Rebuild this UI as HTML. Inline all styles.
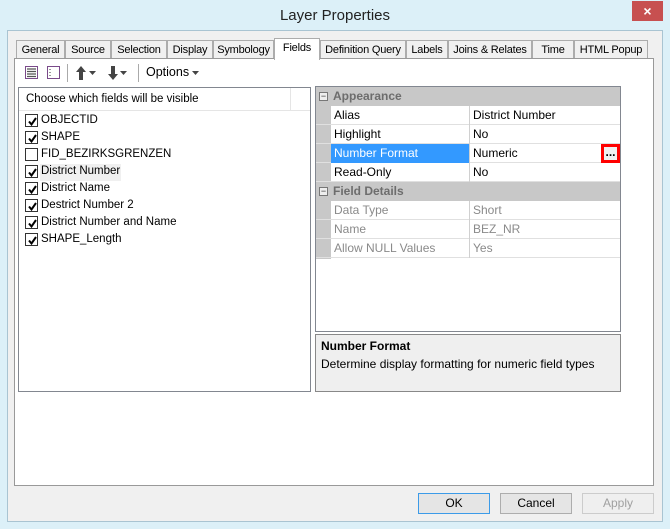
<!DOCTYPE html><html><head><style>
*{margin:0;padding:0;box-sizing:border-box}
body{width:670px;height:529px;background:#dcf0f8;font-family:"Liberation Sans",sans-serif;font-size:12px;color:#000;position:relative;overflow:hidden}
.a{position:absolute}
.tab{position:absolute;top:40px;height:19px;background:#f0f0f0;border:1px solid #acacac;border-bottom:none;text-align:center;line-height:18px;font-size:11px;white-space:nowrap;letter-spacing:-0.2px}
.cb{position:absolute;left:6px;width:13px;height:13px;border:1px solid #333;background:#fff}
.cb svg{position:absolute;left:1px;top:1px}
.it{position:absolute;left:22px;font-size:11.5px;height:17px;line-height:17px}
.row{position:absolute;left:0;width:304px;height:19px;border-bottom:1px solid #e0e0e0}
.n{position:absolute;left:15px;width:139px;height:19px;line-height:18px;padding-left:3px;border-right:1px solid #d0d0d0;font-size:12px}
.v{position:absolute;left:154px;height:19px;line-height:18px;padding-left:3px;font-size:12px}
.cat{position:absolute;left:0;width:304px;height:19px;background:#c8c8c8;font-weight:bold;color:#6d6d6d;line-height:18px;padding-left:17px;font-size:12px}
.mn{position:absolute;left:3px;top:5px;width:9px;height:9px;border:1px solid #777;background:#eee;font-size:9px;line-height:6px;text-align:center;color:#333;font-weight:normal}
.btn{position:absolute;top:493px;width:72px;height:21px;border:1px solid #adadad;background:#e5e5e5;text-align:center;line-height:19px;font-size:12px}
</style></head><body>
<div class="a" style="left:0;top:0;width:670px;height:30px;text-align:center;line-height:32px;font-size:15px;color:#222">Layer Properties</div>
<div class="a" style="left:632px;top:1px;width:31px;height:20px;background:#c75050;color:#fff;text-align:center;line-height:20px;font-size:14px;font-weight:bold">×</div>
<div class="a" style="left:7px;top:30px;width:656px;height:492px;background:#f0f0f0;border:1px solid #a9c4d2"></div>
<div class="tab" style="left:16px;width:49px">General</div>
<div class="tab" style="left:65px;width:46px">Source</div>
<div class="tab" style="left:111px;width:56px">Selection</div>
<div class="tab" style="left:167px;width:46px">Display</div>
<div class="tab" style="left:213px;width:61px">Symbology</div>
<div class="tab" style="left:320px;width:86px">Definition Query</div>
<div class="tab" style="left:406px;width:42px">Labels</div>
<div class="tab" style="left:448px;width:84px">Joins &amp; Relates</div>
<div class="tab" style="left:532px;width:42px">Time</div>
<div class="tab" style="left:574px;width:74px">HTML Popup</div>
<div class="a" style="left:14px;top:58px;width:640px;height:428px;background:#fff;border:1px solid #999"></div>
<div class="tab" style="left:274px;top:38px;width:46px;height:22px;background:#fff;z-index:2">Fields</div>
<svg class="a" style="left:22px;top:64px" width="190" height="18">
<rect x="3.5" y="2.5" width="12" height="12" fill="#fff" stroke="#7a4a8a"/><path d="M5 5h9M5 7.5h9M5 10h9M5 12.5h9" stroke="#555" stroke-width="1.2"/>
<rect x="25.5" y="2.5" width="12" height="12" fill="#fff" stroke="#7a4a8a"/><path d="M28 5v1M28 8v1M28 11v1" stroke="#333"/>
<path d="M45.5 0v18" stroke="#aaa"/>
<path d="M59 2l-5 6h3v8h4V8h3z" fill="#444"/><path d="M67 7h7l-3.5 4z" fill="#444"/>
<path d="M91 16l-5-6h3V2h4v8h3z" fill="#444"/><path d="M98 7h7l-3.5 4z" fill="#444"/>
<path d="M116.5 0v18" stroke="#aaa"/>
<path d="M170 7h7l-3.5 4z" fill="#444"/>
</svg>
<div class="a" style="left:146px;top:65px;font-size:12.5px">Options</div>
<div class="a" style="left:18px;top:87px;width:293px;height:305px;border:1px solid #828790;background:#fff">
<div class="a" style="left:0;top:0;width:291px;height:23px;border-bottom:1px solid #e5e5e5"></div>
<div class="a" style="left:271px;top:0;height:23px;border-left:1px solid #e5e5e5"></div>
<div class="a" style="left:7px;top:5px;font-size:11.5px">Choose which fields will be visible</div>
<div class="a" style="left:21px;top:76px;width:81px;height:17px;background:#f0f0f0"></div>
<div class="cb" style="top:26px"><svg width="11" height="11"><path d="M2 5.5l2.5 3L9 2" fill="none" stroke="#000" stroke-width="2"/></svg></div><div class="it" style="top:24px">OBJECTID</div>
<div class="cb" style="top:43px"><svg width="11" height="11"><path d="M2 5.5l2.5 3L9 2" fill="none" stroke="#000" stroke-width="2"/></svg></div><div class="it" style="top:41px">SHAPE</div>
<div class="cb" style="top:60px"></div><div class="it" style="top:58px">FID_BEZIRKSGRENZEN</div>
<div class="cb" style="top:77px"><svg width="11" height="11"><path d="M2 5.5l2.5 3L9 2" fill="none" stroke="#000" stroke-width="2"/></svg></div><div class="it" style="top:75px">District Number</div>
<div class="cb" style="top:94px"><svg width="11" height="11"><path d="M2 5.5l2.5 3L9 2" fill="none" stroke="#000" stroke-width="2"/></svg></div><div class="it" style="top:92px">District Name</div>
<div class="cb" style="top:111px"><svg width="11" height="11"><path d="M2 5.5l2.5 3L9 2" fill="none" stroke="#000" stroke-width="2"/></svg></div><div class="it" style="top:109px">Destrict Number 2</div>
<div class="cb" style="top:128px"><svg width="11" height="11"><path d="M2 5.5l2.5 3L9 2" fill="none" stroke="#000" stroke-width="2"/></svg></div><div class="it" style="top:126px">District Number and Name</div>
<div class="cb" style="top:145px"><svg width="11" height="11"><path d="M2 5.5l2.5 3L9 2" fill="none" stroke="#000" stroke-width="2"/></svg></div><div class="it" style="top:143px">SHAPE_Length</div>
</div>
<div class="a" style="left:315px;top:86px;width:306px;height:246px;border:1px solid #828790;background:#fff">
<div class="a" style="left:0;top:0;width:15px;height:172px;background:#c8c8c8"></div>
<div class="cat" style="top:0"><div class="mn">−</div>Appearance</div>
<div class="row" style="top:19px"><div class="n">Alias</div><div class="v">District Number</div></div>
<div class="row" style="top:38px"><div class="n">Highlight</div><div class="v">No</div></div>
<div class="row" style="top:57px"><div class="n" style="background:#3399ff;color:#fff">Number Format</div><div class="v">Numeric</div>
<div class="a" style="left:285px;top:0;width:19px;height:19px;border:3px solid #f00;background:#f0f0f0;font-weight:bold;text-align:center;line-height:10px">...</div></div>
<div class="row" style="top:76px"><div class="n">Read-Only</div><div class="v">No</div></div>
<div class="cat" style="top:95px"><div class="mn">−</div>Field Details</div>
<div class="row" style="top:114px;color:#8a8a8a"><div class="n">Data Type</div><div class="v">Short</div></div>
<div class="row" style="top:133px;color:#8a8a8a"><div class="n">Name</div><div class="v">BEZ_NR</div></div>
<div class="row" style="top:152px;color:#8a8a8a"><div class="n">Allow NULL Values</div><div class="v">Yes</div></div>
</div>
<div class="a" style="left:315px;top:334px;width:306px;height:58px;border:1px solid #888;background:#efefef;padding:4px 5px">
<div style="font-weight:bold">Number Format</div><div style="margin-top:4px">Determine display formatting for numeric field types</div></div>
<div class="btn" style="left:418px;border-color:#3c9be8">OK</div>
<div class="btn" style="left:500px">Cancel</div>
<div class="btn" style="left:582px;color:#a0a0a0;border-color:#ccc;background:#efefef">Apply</div>
</body></html>
